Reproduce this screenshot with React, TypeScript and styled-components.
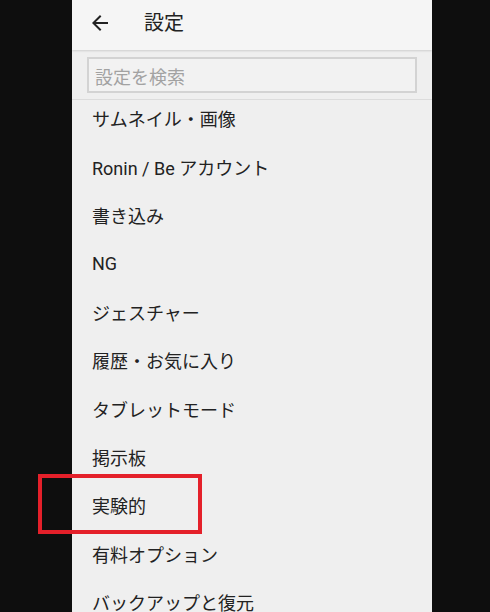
import React from "react";
import styled, { createGlobalStyle } from "styled-components";

const Global = createGlobalStyle`
  html, body { margin: 0; padding: 0; background: #0e0e0e; }
  body { font-family: Roboto, "Noto Sans CJK JP", "Noto Sans", sans-serif; }
  * { box-sizing: border-box; }
`;

const Stage = styled.div`
  position: relative;
  width: 490px;
  height: 612px;
  overflow: hidden;
  background: #0e0e0e;
`;

const Panel = styled.div`
  width: 360px;
  height: 612px;
  margin-left: 72px;
  background: #efefef;
  display: flex;
  flex-direction: column;
  overflow: hidden;
  position: relative;
`;

const Header = styled.header`
  height: 50px;
  flex: none;
  display: flex;
  align-items: center;
  padding: 0 0 4px 16px;
  background: #f5f5f5;
  box-shadow: 0 1px 2px rgba(0, 0, 0, 0.14);
  position: relative;
  z-index: 2;
`;

const BackButton = styled.button`
  width: 24px;
  height: 24px;
  padding: 0;
  border: none;
  background: transparent;
  display: flex;
  align-items: center;
  justify-content: center;
  color: #222;
`;

const Title = styled.h1`
  margin: 0 0 0 32px;
  font-size: 20px;
  font-weight: 400;
  color: #222;
  line-height: 1;
`;

const SearchArea = styled.div`
  height: 50px;
  flex: none;
  padding: 7px 15px 0 15px;
  border-bottom: 1px solid #dcdcdc;
  background: #efefef;
`;

const SearchBox = styled.div`
  width: 330px;
  height: 36px;
  border: 2px solid #d3d3d3;
  background: #f2f2f2;
  display: flex;
  align-items: center;
  padding: 2px 0 0 6px;
  font-size: 18px;
  color: #a2a2a2;
`;

const ListViewport = styled.div`
  flex: 1;
  overflow: hidden;
`;

const List = styled.ul`
  list-style: none;
  margin: -6px 0 0 0;
  padding: 0;
`;

const Item = styled.li`
  height: 48.4px;
  display: flex;
  align-items: center;
  padding-left: 20px;
  font-size: 18px;
  color: #222;
`;

const Highlight = styled.div`
  position: absolute;
  left: 38px;
  top: 474px;
  width: 164px;
  height: 60px;
  border: 4px solid #e4202a;
  pointer-events: none;
`;

const items = [
  "サムネイル・画像",
  "Ronin / Be アカウント",
  "書き込み",
  "NG",
  "ジェスチャー",
  "履歴・お気に入り",
  "タブレットモード",
  "掲示板",
  "実験的",
  "有料オプション",
  "バックアップと復元",
];

export default function App() {
  return (
    <Stage>
      <Global />
      <Panel>
        <Header>
          <BackButton aria-label="戻る">
            <svg width="24" height="24" viewBox="0 0 24 24" fill="currentColor">
              <path d="M20 11H7.83l5.59-5.59L12 4l-8 8 8 8 1.41-1.41L7.83 13H20v-2z" />
            </svg>
          </BackButton>
          <Title>設定</Title>
        </Header>
        <SearchArea>
          <SearchBox>設定を検索</SearchBox>
        </SearchArea>
        <ListViewport>
          <List>
            {items.map((t) => (
              <Item key={t}>{t}</Item>
            ))}
          </List>
        </ListViewport>
      </Panel>
      <Highlight />
    </Stage>
  );
}
